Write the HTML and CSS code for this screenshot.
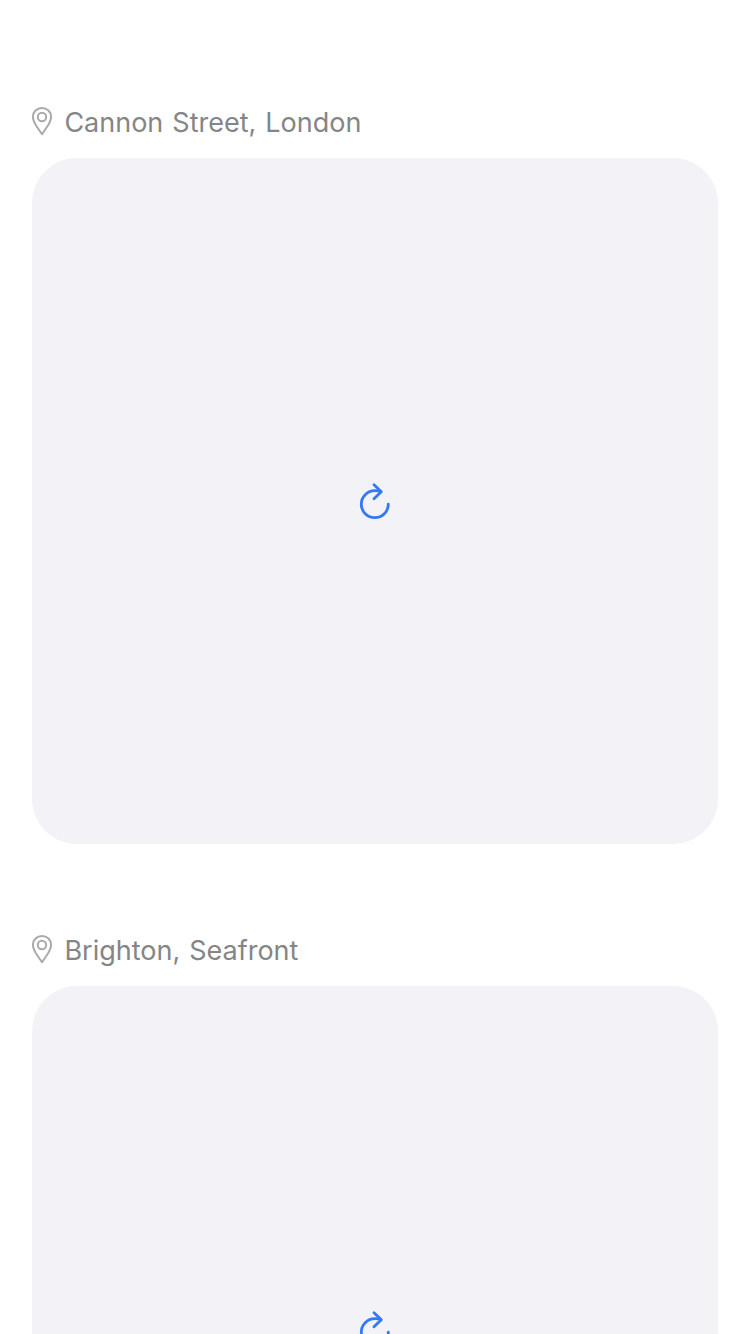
FILE: index.html
```html
<!DOCTYPE html>
<html lang="en">
<head>
<meta charset="utf-8">
<title>Locations</title>
<link rel="stylesheet" href="styles.css">
</head>
<body>
<main class="feed">
  <article class="post">
    <header class="place">
      <svg class="pin" viewBox="0 0 22 30"><path d="M11 2C5.900 2 1.900 5.900 1.900 10.800c0 3 1.300 5.600 3 8.500L11 28.200l6.100-8.900c1.700-2.900 3-5.500 3-8.500C20.100 5.900 16.100 2 11 2Z"/><circle cx="11" cy="11" r="4.200"/></svg>
      <span class="name">Cannon Street, London</span>
    </header>
    <div class="photo">
      <svg class="reload" viewBox="0 0 34 38"><path d="M22.500 9.300C20.500 8.800 18.500 8.700 16.800 8.700A13.500 13.500 0 1 0 30.300 22.200"/><path d="M16 2.700l7.300 7-7.300 7"/></svg>
    </div>
  </article>
  <article class="post">
    <header class="place">
      <svg class="pin" viewBox="0 0 22 30"><path d="M11 2C5.900 2 1.900 5.900 1.900 10.800c0 3 1.300 5.600 3 8.500L11 28.200l6.100-8.900c1.700-2.900 3-5.500 3-8.500C20.100 5.900 16.100 2 11 2Z"/><circle cx="11" cy="11" r="4.200"/></svg>
      <span class="name">Brighton, Seafront</span>
    </header>
    <div class="photo">
      <svg class="reload" viewBox="0 0 34 38"><path d="M22.500 9.300C20.500 8.800 18.500 8.700 16.800 8.700A13.500 13.500 0 1 0 30.300 22.200"/><path d="M16 2.700l7.300 7-7.300 7"/></svg>
    </div>
  </article>
</main>
</body>
</html>
```
FILE: styles.css
```css
body { margin: 0; background: #fff; font-family: Inter, "Liberation Sans", sans-serif; }
.feed { height: 1334px; overflow: hidden; padding: 102px 32px 0; box-sizing: border-box; display: flex; flex-direction: column; gap: 86px; }
.post { flex: none; }
.place { display: flex; align-items: center; height: 40px; margin-bottom: 16px; gap: 11.400px; margin-left: -1px; }
.pin { width: 22px; height: 30px; margin-bottom: 2px; fill: none; stroke: #a9a9ab; stroke-width: 2; stroke-linejoin: round; }
.name { font-size: 27px; line-height: 40px; padding-top: 1.500px; word-spacing: 1.400px; color: #858588; white-space: nowrap; }
.photo { height: 686px; border-radius: 45px; background: #f2f2f7; display: flex; align-items: center; justify-content: center; }
.reload { width: 34px; height: 38px; fill: none; stroke: #3478f6; stroke-width: 2.800; stroke-linecap: round; stroke-linejoin: round; }
```
